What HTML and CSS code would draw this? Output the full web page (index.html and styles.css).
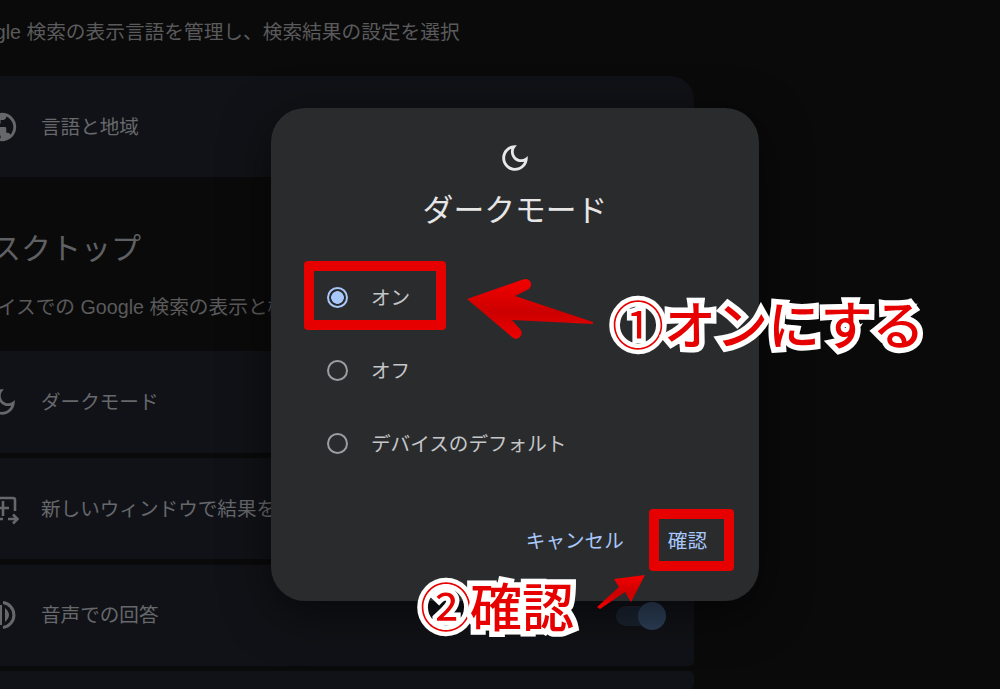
FILE: index.html
```html
<!DOCTYPE html>
<html lang="ja">
<head>
<meta charset="utf-8">
<title>ダークモード</title>
<link rel="stylesheet" href="styles.css">
</head>
<body>
<main class="page">
  <p class="desc first">Google 検索の表示言語を管理し、検索結果の設定を選択</p>
  <section class="group lang">
    <div class="card">
      <svg class="icon" viewBox="0 0 24 24"><path fill="currentColor" fill-rule="evenodd" d="M12 2a10 10 0 1 0 0 20 10 10 0 0 0 0-20zM4 12c0-.6.1-1.200.2-1.800L9 15v1c0 1.100.900 2 2 2v2a8 8 0 0 1-7-8zm13.900 5.400A2 2 0 0 0 16 16h-1v-3c0-.6-.4-1-1-1H8v-2h2c.6 0 1-.4 1-1V7h2c1.100 0 2-.9 2-2v-.4a8 8 0 0 1 2.900 12.800z"/></svg>
      <span class="label">言語と地域</span>
      <span class="chevron"></span>
    </div>
  </section>
  <h2 class="heading">デスクトップ</h2>
  <p class="desc">デバイスでの Google 検索の表示と機能を管理</p>
  <section class="group list">
    <div class="card">
      <svg class="icon" viewBox="0 0 24 24"><path fill="currentColor" d="M9.37 5.510c-.18.64-.27 1.310-.27 1.990 0 4.080 3.320 7.400 7.400 7.400.68 0 1.350-.09 1.990-.27C17.450 17.190 14.930 19 12 19c-3.860 0-7-3.140-7-7 0-2.930 1.810-5.450 4.370-6.490zM12 3c-4.970 0-9 4.030-9 9s4.030 9 9 9 9-4.030 9-9c0-.46-.04-.92-.1-1.360-.98 1.370-2.580 2.260-4.400 2.260-2.980 0-5.400-2.420-5.400-5.400 0-1.810.89-3.420 2.260-4.400-.44-.06-.9-.1-1.360-.1z"/></svg>
      <span class="label">ダークモード</span>
    </div>
    <div class="card">
      <svg class="icon" viewBox="0 0 34 34"><path fill="none" stroke="currentColor" stroke-width="2.600" d="M4 27V8a2 2 0 0 1 2-2h22a2 2 0 0 1 2 2v11M18 9v15M11 16h13M4 27h14M23 27h9M28 22.500l4.500 4.500-4.500 4.500"/></svg>
      <span class="label">新しいウィンドウで結果を開く</span>
    </div>
    <div class="card">
      <svg class="icon" viewBox="0 0 34 34"><path fill="currentColor" d="M14 7h3v20h-3zM20 10q8 7 0 14z"/><path fill="none" stroke="currentColor" stroke-width="3" d="M18 4.600A12.500 12.500 0 0 1 18 29.400"/></svg>
      <span class="label">音声での回答</span>
      <span class="toggle"><span class="knob"></span></span>
    </div>
    <div class="card last"></div>
  </section>
</main>

<div class="dialog" role="dialog">
  <svg class="moon" viewBox="0 0 24 24"><path fill="currentColor" d="M9.37 5.510c-.18.64-.27 1.310-.27 1.990 0 4.080 3.320 7.400 7.400 7.400.68 0 1.350-.09 1.990-.27C17.450 17.190 14.930 19 12 19c-3.860 0-7-3.140-7-7 0-2.930 1.810-5.450 4.370-6.490zM12 3c-4.970 0-9 4.030-9 9s4.030 9 9 9 9-4.030 9-9c0-.46-.04-.92-.1-1.360-.98 1.370-2.580 2.260-4.400 2.260-2.980 0-5.400-2.420-5.400-5.400 0-1.810.89-3.420 2.260-4.400-.44-.06-.9-.1-1.360-.1z"/></svg>
  <h1 class="title">ダークモード</h1>
  <div class="options">
    <label class="option"><span class="radio on"></span><span class="option-text">オン</span></label>
    <label class="option"><span class="radio"></span><span class="option-text">オフ</span></label>
    <label class="option"><span class="radio"></span><span class="option-text">デバイスのデフォルト</span></label>
  </div>
  <div class="actions">
    <span class="btn">キャンセル</span>
    <span class="btn">確認</span>
  </div>
</div>

<div class="mark mark-on"></div>
<div class="mark mark-ok"></div>
<svg class="arrows" viewBox="0 0 1000 689">
  <defs>
    <linearGradient id="red" x1="0" y1="0" x2="0" y2="1">
      <stop offset="0" stop-color="#f40000"/>
      <stop offset=".55" stop-color="#cc0000"/>
      <stop offset="1" stop-color="#ee0000"/>
    </linearGradient>
  </defs>
  <path fill="url(#red)" d="M467 299 L523 279.500 A5.500 5.500 0 0 1 528 289.500 L515 296 L593 322 L593 324 L512 320 L520 329 A5.500 5.500 0 0 1 512 337 Z"/>
  <path fill="url(#red)" d="M645 575 L631 602 L625 592 L600 609 L597 607 L619 587 L614 579 Z"/>
</svg>
<div class="note note-on"><span class="num">①</span>オンにする</div>
<div class="note note-ok"><span class="num">②</span>確認</div>
</body>
</html>
```

FILE: styles.css
```css
* { box-sizing: border-box; }
html, body { height: 100%; }
body {
  margin: 0;
  overflow: hidden;
  background: #0a0a0a;
  color: #5d5e61;
  font-family: "Liberation Sans", "Noto Sans CJK JP", sans-serif;
}
.page {
  width: 733px;
  margin-left: -39px;
  padding-top: 20px;
}
.desc {
  margin: 0 0 0 -3.5px;
  font-size: 19.7px;
  line-height: 24px;
  white-space: nowrap;
  color: #5a5a5c;
}
.heading {
  margin: 54px 0 28px;
  font-size: 30px;
  line-height: 36px;
  font-weight: 400;
  color: #5f6063;
}
.group { display: flex; flex-direction: column; gap: 5.33px; }
.lang { margin-top: 32px; }
.list { margin-top: 32px; }
.card {
  height: 101.33px;
  flex: none;
  display: flex;
  align-items: center;
  gap: 22px;
  padding: 0 33px 0 24px;
  background: #111217;
  border-radius: 5px;
  color: #66676b;
}
.card.last { height: 18px; }
.lang .card { border-radius: 24px; padding-right: 38px; }
.icon { width: 34px; height: 34px; flex: none; }
.label {
  font-size: 19.6px;
  line-height: 24px;
  white-space: nowrap;
  flex: 1;
  color: #66686c;
}
.chevron { width: 30px; height: 30px; border-radius: 50%; background: #1a1b20; }
.toggle {
  position: relative;
  width: 45px;
  height: 20px;
  margin-top: 2px;
  border-radius: 10px;
  background: #1b2330;
}
.knob {
  position: absolute;
  right: -5px;
  top: -4px;
  width: 28px;
  height: 28px;
  border-radius: 50%;
  background: #2d3f58;
}
.dialog {
  position: absolute;
  left: 271px;
  top: 108px;
  width: 488px;
  height: 493px;
  display: flex;
  flex-direction: column;
  align-items: center;
  padding-top: 33px;
  background: #2a2b2d;
  border-radius: 34px;
  box-shadow: 0 12px 48px rgba(0, 0, 0, .55);
  color: #e3e3e3;
}
.moon { width: 34px; height: 34px; flex: none; color: #e8e8e8; }
.title {
  margin: 12px 0 0;
  font-size: 30.8px;
  line-height: 42px;
  font-weight: 400;
  color: #e6e6e6;
  font-family: "Noto Sans CJK JP", sans-serif;
}
.options {
  align-self: stretch;
  display: flex;
  flex-direction: column;
  margin-top: 32.5px;
}
.option {
  height: 72.8px;
  display: flex;
  align-items: center;
  gap: 23px;
  padding-left: 56px;
  font-size: 19.6px;
  color: #c4c6c9;
}
.option-text { margin-bottom: 2px; }
.radio {
  width: 21px;
  height: 21px;
  flex: none;
  border: 2.4px solid #9b9da0;
  border-radius: 50%;
}
.radio.on {
  border-color: #a8c7fa;
  background: radial-gradient(circle, #a8c7fa 0 6px, transparent 6.6px);
}
.actions {
  align-self: stretch;
  display: flex;
  justify-content: flex-end;
  gap: 44px;
  margin-top: 46px;
  padding-right: 52px;
}
.btn { font-size: 19.6px; line-height: 30px; color: #a8c7fa; }
.mark {
  position: absolute;
  border: 10.5px solid #e60000;
  border-radius: 4px;
}
.mark-on { left: 304px; top: 261px; width: 142px; height: 69px; }
.mark-ok { left: 649px; top: 509px; width: 85px; height: 62px; }
.arrows { position: absolute; left: 0; top: 0; width: 1000px; height: 689px; pointer-events: none; }
.note {
  position: absolute;
  font-family: "Noto Sans CJK JP", sans-serif;
  font-weight: 500;
  font-size: 52px;
  line-height: 60px;
  white-space: nowrap;
  color: #e60000;
  -webkit-text-stroke: 11px #fff;
  paint-order: stroke fill;
}
.num { font-weight: 400; -webkit-text-stroke-width: 9px; }
.note-on { left: 612px; top: 293px; }
.note-ok { left: 420px; top: 575px; }
.note-ok .num { margin-right: -2px; }
```
